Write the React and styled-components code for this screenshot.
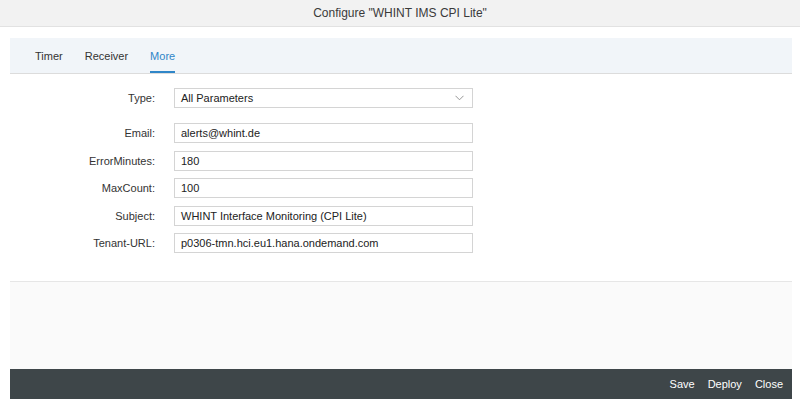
import React from "react";
import styled, { createGlobalStyle } from "styled-components";

const GlobalStyle = createGlobalStyle`
  html, body {
    margin: 0;
    padding: 0;
    background: #ffffff;
    font-family: "Liberation Sans", Arial, sans-serif;
  }
`;

const Page = styled.div`
  width: 800px;
  height: 407px;
  display: flex;
  flex-direction: column;
  background: #ffffff;
`;

const TitleBar = styled.div`
  height: 26px;
  background: #f2f2f2;
  border-bottom: 1px solid #e2e2e2;
  display: flex;
  align-items: center;
  justify-content: center;
  font-size: 12px;
  color: #3a3a3a;
`;

const Dialog = styled.div`
  flex: 1;
  display: flex;
  flex-direction: column;
  margin: 11px 8px 8px 10px;
`;

const TabBar = styled.div`
  height: 35px;
  background: #f1f5f9;
  border-bottom: 1px solid #dcdcdc;
  display: flex;
  align-items: stretch;
  padding-left: 25px;
  gap: 22px;
`;

const Tab = styled.div`
  display: flex;
  align-items: center;
  position: relative;
  font-size: 11px;
  color: ${(p) => (p.$active ? "#2f86c8" : "#333333")};

  &::after {
    content: "";
    display: ${(p) => (p.$active ? "block" : "none")};
    position: absolute;
    left: 0;
    right: 0;
    bottom: 0;
    height: 2px;
    background: #2f86c8;
  }
`;

const Form = styled.div`
  height: 208px;
  padding-top: 14px;
  box-sizing: border-box;
  display: flex;
  flex-direction: column;
  gap: 7.5px;
  border-bottom: 1px solid #e6e6e6;
`;

const Row = styled.div`
  display: flex;
  align-items: center;
  margin-bottom: ${(p) => (p.$spaced ? "7.5px" : "0")};
`;

const Label = styled.div`
  width: 145px;
  text-align: right;
  font-size: 11px;
  color: #333333;
  padding-right: 19px;
`;

const Field = styled.div`
  width: 299px;
  height: 20px;
  box-sizing: border-box;
  border: 1px solid #d4d4d4;
  background: #ffffff;
  display: flex;
  align-items: center;
  justify-content: space-between;
  padding: 0 8px 0 6px;
  font-size: 11px;
  color: #222222;
`;

const Chevron = () => (
  <svg width="9" height="6" viewBox="0 0 9 6">
    <path d="M0.5 0.8 L4.5 4.8 L8.5 0.8" fill="none" stroke="#8a8a8a" strokeWidth="0.9" />
  </svg>
);

const EmptyArea = styled.div`
  flex: 1;
  background: #fafafa;
`;

const Footer = styled.div`
  height: 30px;
  background: #3e4649;
  display: flex;
  align-items: center;
  justify-content: flex-end;
  padding-right: 9px;
  gap: 13px;
`;

const FooterButton = styled.div`
  font-size: 11px;
  color: #ffffff;
`;

const fields = [
  { label: "Email:", value: "alerts@whint.de" },
  { label: "ErrorMinutes:", value: "180" },
  { label: "MaxCount:", value: "100" },
  { label: "Subject:", value: "WHINT Interface Monitoring (CPI Lite)" },
  { label: "Tenant-URL:", value: "p0306-tmn.hci.eu1.hana.ondemand.com" },
];

export default function App() {
  return (
    <Page>
      <GlobalStyle />
      <TitleBar>Configure "WHINT IMS CPI Lite"</TitleBar>
      <Dialog>
        <TabBar>
          <Tab>Timer</Tab>
          <Tab>Receiver</Tab>
          <Tab $active>More</Tab>
        </TabBar>
        <Form>
          <Row $spaced>
            <Label>Type:</Label>
            <Field>
              All Parameters
              <Chevron />
            </Field>
          </Row>
          {fields.map((f) => (
            <Row key={f.label}>
              <Label>{f.label}</Label>
              <Field>{f.value}</Field>
            </Row>
          ))}
        </Form>
        <EmptyArea />
        <Footer>
          <FooterButton>Save</FooterButton>
          <FooterButton>Deploy</FooterButton>
          <FooterButton>Close</FooterButton>
        </Footer>
      </Dialog>
    </Page>
  );
}
